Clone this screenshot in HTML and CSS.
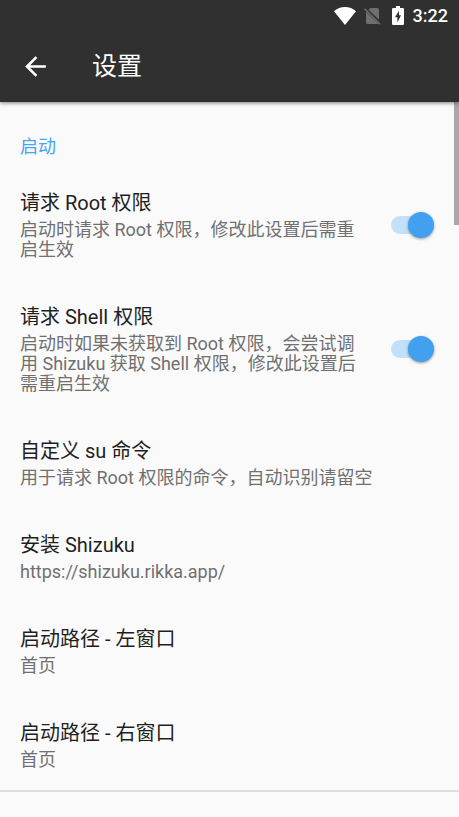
FILE: index.html
```html
<!DOCTYPE html>
<html lang="zh-CN">
<head>
<meta charset="utf-8">
<meta name="viewport" content="width=device-width, initial-scale=1">
<title>设置</title>
<link rel="stylesheet" href="styles.css">
</head>
<body>
<header class="top">
  <div class="status">
    <svg class="wifi" width="22" height="18" viewBox="0 0 22 18" aria-hidden="true"><path d="M0 4.2C3 1.6 6.800 0 11 0s8 1.600 11 4.200L11 18z" fill="#fff"/></svg>
    <svg class="sim" width="17" height="18" viewBox="0 0 17 18" aria-hidden="true"><path d="M6.300 1H13.500Q15 1 15 2.500V12.800L4.500 2.800zM2 4.800 14.600 17H3.500Q2 17 2 15.500z" fill="#6f6f6f"/><path d="M.6 1.700 16 17.200" stroke="#6f6f6f" stroke-width="1.500"/></svg>
    <svg class="battery" width="12" height="19" viewBox="0 0 12 19" aria-hidden="true"><path d="M4 0h4v2h2.700Q12 2 12 3.300v14.400Q12 19 10.700 19H1.300Q0 19 0 17.700V3.300Q0 2 1.300 2H4z" fill="#fff"/><path d="M7 4.700 3 11.200h2.400v5.200L9 9.300H7z" fill="#303030"/></svg>
    <time class="clock">3:22</time>
  </div>
  <div class="toolbar">
    <button class="back" type="button" aria-label="返回">
      <svg width="31" height="31" viewBox="0 0 24 24" aria-hidden="true"><path d="M20 11H7.830l5.590-5.590L12 4l-8 8 8 8 1.410-1.410L7.830 13H20z" fill="#fff"/></svg>
    </button>
    <h1 class="heading">设置</h1>
  </div>
</header>
<main class="content">
  <div class="scrollbar"></div>
  <section class="group">
    <h2 class="group-title">启动</h2>
    <label class="item" for="root">
      <span class="text"><span class="title">请求 Root 权限</span><span class="summary">启动时请求 Root 权限，修改此设置后需重启生效</span></span>
      <input class="switch" id="root" type="checkbox" role="switch" checked>
    </label>
    <label class="item" for="shell">
      <span class="text"><span class="title">请求 Shell 权限</span><span class="summary">启动时如果未获取到 Root 权限，会尝试调用 Shizuku 获取 Shell 权限，修改此设置后需重启生效</span></span>
      <input class="switch" id="shell" type="checkbox" role="switch" checked>
    </label>
    <button class="item" type="button">
      <span class="text"><span class="title">自定义 su 命令</span><span class="summary">用于请求 Root 权限的命令，自动识别请留空</span></span>
    </button>
    <a class="item" href="https://shizuku.rikka.app/">
      <span class="text"><span class="title">安装 Shizuku</span><span class="summary">https://shizuku.rikka.app/</span></span>
    </a>
    <button class="item" type="button">
      <span class="text"><span class="title">启动路径 - 左窗口</span><span class="summary">首页</span></span>
    </button>
    <button class="item" type="button">
      <span class="text"><span class="title">启动路径 - 右窗口</span><span class="summary">首页</span></span>
    </button>
  </section>
</main>
</body>
</html>
```
FILE: styles.css
```css
* {
  box-sizing: border-box;
}

body {
  margin: 0;
  min-height: 100vh;
  background: #fafafa;
  color: #1f1f1f;
  font-family: Roboto, "Noto Sans CJK SC", sans-serif;
}

.top {
  position: relative;
  z-index: 1;
  background: #303030;
  color: #fff;
  box-shadow: 0 1px 4px rgba(0, 0, 0, 0.5);
}

.status {
  display: flex;
  justify-content: flex-end;
  align-items: center;
  height: 31px;
  padding-right: 11px;
}

.sim {
  margin-left: 8px;
}

.battery {
  margin-left: 11px;
}

.clock {
  margin-left: 9px;
  font-size: 18px;
  font-weight: 500;
  line-height: 31px;
}

.toolbar {
  display: flex;
  align-items: center;
  height: 71px;
  padding: 0 20px;
}

.back {
  display: flex;
  padding: 0;
  border: 0;
  background: none;
  cursor: pointer;
}

.heading {
  margin: 0 0 0 41px;
  font-size: 25px;
  font-weight: 400;
  line-height: 35px;
}

.content {
  position: relative;
}

.scrollbar {
  position: absolute;
  top: 0;
  right: 0;
  width: 5px;
  height: 123px;
  background: #a9a9a9;
}

.group {
  border-bottom: 2px solid #dedede;
}

.group-title {
  margin: 0;
  padding: 33px 20px 7px;
  color: #42a5f5;
  font-size: 18px;
  font-weight: 400;
  line-height: 24px;
}

.item {
  display: flex;
  align-items: center;
  gap: 32px;
  width: 100%;
  padding: 23px 25px 20px 20px;
  border: 0;
  background: none;
  color: inherit;
  font: inherit;
  text-align: left;
  text-decoration: none;
  cursor: pointer;
}

.text {
  display: flex;
  flex: 1;
  flex-direction: column;
  gap: 3px;
}

.title {
  font-size: 20px;
  line-height: 28px;
}

.summary {
  color: #707070;
  font-size: 18px;
  line-height: 20px;
}

.switch {
  position: relative;
  flex: none;
  width: 43px;
  height: 18px;
  margin: 0;
  appearance: none;
  border-radius: 9px;
  background: #c3e0f9;
  cursor: pointer;
}

.switch::after {
  content: "";
  position: absolute;
  top: -4px;
  right: 0;
  width: 26px;
  height: 26px;
  border-radius: 50%;
  background: #42a0f0;
  box-shadow: 0 1px 3px rgba(0, 0, 0, 0.4);
}

.switch:not(:checked) {
  background: #b9b9b9;
}

.switch:not(:checked)::after {
  right: auto;
  left: 0;
  background: #fafafa;
}
```
